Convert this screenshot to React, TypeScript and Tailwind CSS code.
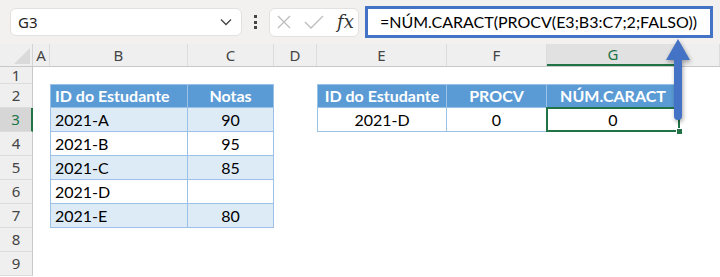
import React from "react";

const cols = [
    { key: "A", w: "w-[17px]" },
    { key: "B", w: "w-[138px]" },
    { key: "C", w: "w-[86px]" },
    { key: "D", w: "w-[43px]" },
    { key: "E", w: "w-[130px]" },
    { key: "F", w: "w-[100px]" },
    { key: "G", w: "w-[133px]" },
    { key: "H", w: "flex-1" },
];

const students = [
    ["2021-A", "90"],
    ["2021-B", "95"],
    ["2021-C", "85"],
    ["2021-D", ""],
    ["2021-E", "80"],
];

const tb = "border-[#9bc2e6]";

function cellFor(row: number, col: string) {
    // left table B2:C7
    if ((col === "B" || col === "C") && row >= 2 && row <= 7) {
        const header = row === 2;
        const band = !header && row % 2 === 1;
        const left = col === "B";
        let text = "";
        if (header) text = left ? "ID do Estudante" : "Notas";
        else text = students[row - 3][left ? 0 : 1];
        return (
            <div
                className={`h-full border-b border-r ${tb} ${header ? "border-t bg-[#5b9bd5] font-bold text-white" : band ? "bg-[#ddebf7] text-black" : "bg-white text-black"} ${left ? "border-l pl-1 text-left" : "text-center"} flex items-center ${left ? "justify-start" : "justify-center"}`}
            >
                {text}
            </div>
        );
    }
    // right table E2:G3
    if ((col === "E" || col === "F" || col === "G") && (row === 2 || row === 3)) {
        const header = row === 2;
        const labels: Record<string, string[]> = {
            E: ["ID do Estudante", "2021-D"],
            F: ["PROCV", "0"],
            G: ["NÚM.CARACT", "0"],
        };
        return (
            <div
                className={`relative flex h-full items-center justify-center border-b border-r ${tb} ${header ? "border-t bg-[#5b9bd5] font-bold text-white" : "bg-white text-black"} ${col === "E" ? "border-l" : ""}`}
            >
                {labels[col][header ? 0 : 1]}
                {col === "G" && !header && (
                    <>
                        <div className="absolute -top-px -left-px -right-px -bottom-px border-2 border-[#217346]" />
                        <div className="absolute -right-[4px] -bottom-[4px] h-[7px] w-[7px] border border-white bg-[#217346]" />
                    </>
                )}
            </div>
        );
    }
    return <div className="h-full" />;
}

export default function App() {
    const rows = [1, 2, 3, 4, 5, 6, 7, 8, 9];

    return (
        <div className="relative h-[277px] w-[720px] overflow-hidden bg-white font-['Lato',sans-serif] text-[16px]">
            {/* formula bar */}
            <div className="flex h-[44px] items-center bg-[#f3f0f0] pl-[10px] pr-[7px] font-['Noto_Sans',sans-serif]">
                <div className="flex h-[28px] w-[232px] items-center justify-between rounded-md border border-[#e3e0e0] bg-white pl-[7px] pr-[9px] text-[15px] text-[#222]">
                    <span>G3</span>
                    <svg width="12" height="8" viewBox="0 0 12 8" fill="none" stroke="#444" strokeWidth="1.3">
                        <path d="M1 1.5 L6 6.5 L11 1.5" />
                    </svg>
                </div>
                <div className="flex w-[27px] flex-col items-center gap-[2.5px]">
                    <span className="h-[3px] w-[3px] bg-[#444]" />
                    <span className="h-[3px] w-[3px] bg-[#444]" />
                    <span className="h-[3px] w-[3px] bg-[#444]" />
                </div>
                <div className="flex h-[29px] w-[90px] items-center rounded-md border border-[#e3e0e0] bg-white pl-[6px]">
                    <svg width="16" height="16" viewBox="0 0 16 16" stroke="#bdbdbd" strokeWidth="1.3" fill="none">
                        <path d="M2 2 L14 14 M14 2 L2 14" />
                    </svg>
                    <svg className="ml-[12px]" width="20" height="16" viewBox="0 0 20 16" stroke="#bdbdbd" strokeWidth="1.3" fill="none">
                        <path d="M1 8 L7 14 L19 2" />
                    </svg>
                    <span className="ml-[13px] font-['DejaVu_Serif',serif] text-[18px] italic leading-none text-[#333]">
                        fx
                    </span>
                </div>
                <div className="ml-[6px] flex h-[32px] flex-1 items-center border-[3px] border-[#4472c4] bg-white pl-[12px] font-['Lato',sans-serif] text-[16px] text-black">
                    =NÚM.CARACT(PROCV(E3;B3:C7;2;FALSO))
                </div>
            </div>

            {/* column headers */}
            <div className="flex h-[23px] bg-[#efefef] font-['Noto_Sans',sans-serif] text-[15px] text-[#444] border-b border-[#c8c8c8]">
                <div className="relative w-[33px] border-r border-[#d4d4d4]">
                    <div className="absolute right-[2px] bottom-[2px] h-0 w-0 border-b-[16px] border-l-[16px] border-b-[#dadada] border-l-transparent" />
                </div>
                {cols.map((c) => (
                    <div
                        key={c.key}
                        className={`${c.w} flex items-center justify-center border-r border-[#dcdcdc] ${c.key === "G" ? "border-b-2 border-b-[#217346] bg-[#e1e1e1] text-[#217346]" : ""}`}
                    >
                        {c.key !== "H" ? c.key : ""}
                    </div>
                ))}
            </div>

            {/* rows */}
            {rows.map((r) => (
                <div key={r} className={`flex ${r === 1 ? "h-[17px]" : "h-[24px]"}`}>
                    <div
                        className={`flex w-[33px] items-center justify-center border-b border-[#dcdcdc] font-['Noto_Sans',sans-serif] text-[15px] ${r === 3 ? "border-r-2 border-r-[#217346] bg-[#d6d6d6] text-[#217346]" : "border-r border-r-[#c8c8c8] bg-[#efefef] text-[#444]"}`}
                    >
                        {r}
                    </div>
                    {cols.map((c) => (
                        <div key={c.key} className={c.w}>
                            {cellFor(r, c.key)}
                        </div>
                    ))}
                </div>
            ))}

            {/* arrow pointing to the formula */}
            <svg className="absolute left-[662px] top-[36px] drop-shadow-[1px_2px_2px_rgba(0,0,0,0.35)]" width="32" height="88" viewBox="0 0 32 88">
                <path d="M16 3 L28 24 L20 24 L20 80 Q20 84 16 84 Q12 84 12 80 L12 24 L4 24 Z" fill="#4472c4" />
            </svg>
        </div>
    );
}
